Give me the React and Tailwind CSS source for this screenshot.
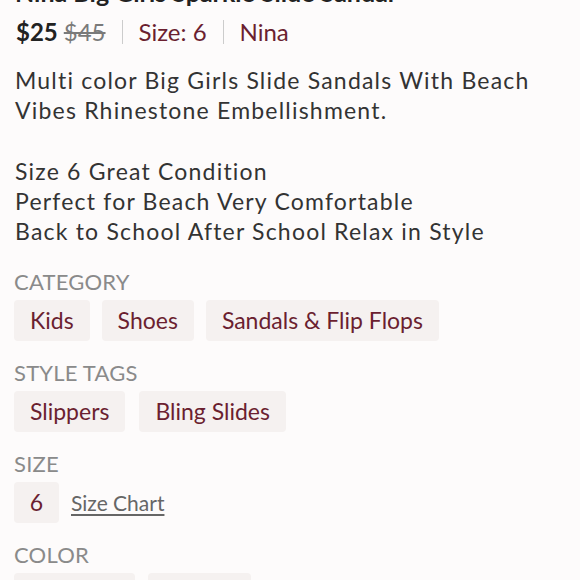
export default function App() {
  const font = { fontFamily: "Lato, 'Liberation Sans', sans-serif" };
  const Chip = ({ children }) => (
    <span className="h-[41px] px-4 flex items-center rounded-[4px] bg-[#f5f1f0] text-[#6b1f30] text-[23px]">
      {children}
    </span>
  );
  const Label = ({ children }) => (
    <div className="text-[22px] leading-[26px] text-[#8a8a8a] tracking-[0.2px]">{children}</div>
  );

  return (
    <div className="w-[580px] h-[580px] overflow-hidden bg-[#fdfbfb]" style={font}>
      <div className="px-[14px]">
        <h1 className="-mt-[23px] ml-[1px] text-[25px] leading-[30px] font-bold text-[#222] whitespace-nowrap">
          Nina Big Girls Sparkle Slide Sandal
        </h1>
        <div className="mt-[10px] ml-[2px] flex items-center h-[30px] text-[24px]">
          <span className="font-bold text-[#222]">$25</span>
          <span className="ml-[6px] text-[#7a7a7a] line-through">$45</span>
          <span className="mx-[16px] w-px h-[24px] bg-[#ccc]"></span>
          <span className="text-[#6b1f30]">Size: 6</span>
          <span className="mx-[16px] w-px h-[24px] bg-[#ccc]"></span>
          <span className="text-[#6b1f30]">Nina</span>
        </div>
        <p className="mt-[18px] ml-[1px] text-[23px] leading-[30.3px] tracking-[1.2px] text-[#333] whitespace-pre-line">
          {"Multi color Big Girls Slide Sandals With Beach Vibes Rhinestone Embellishment.\n\nSize 6 Great Condition\nPerfect for Beach Very Comfortable\nBack to School After School Relax in Style"}
        </p>

        <div className="mt-[22px]">
          <Label>CATEGORY</Label>
          <div className="mt-[5px] flex gap-[12px]">
            <Chip>Kids</Chip>
            <Chip>Shoes</Chip>
            <Chip>Sandals &amp; Flip Flops</Chip>
          </div>
        </div>

        <div className="mt-[19px]">
          <Label>STYLE TAGS</Label>
          <div className="mt-[5px] flex gap-[14px]">
            <Chip>Slippers</Chip>
            <Chip>Bling Slides</Chip>
          </div>
        </div>

        <div className="mt-[19px]">
          <Label>SIZE</Label>
          <div className="mt-[5px] flex items-center gap-[12px]">
            <span className="h-[41px] w-[45px] flex items-center justify-center rounded-[4px] bg-[#f5f1f0] text-[#6b1f30] text-[23px]">
              6
            </span>
            <span className="text-[21px] text-[#666] underline underline-offset-[3px]">Size Chart</span>
          </div>
        </div>

        <div className="mt-[19px]">
          <Label>COLOR</Label>
          <div className="mt-[5px] flex gap-[13px]">
            <Chip><span className="w-[89px]"></span></Chip>
            <Chip><span className="w-[71px]"></span></Chip>
          </div>
        </div>
      </div>
    </div>
  );
}
